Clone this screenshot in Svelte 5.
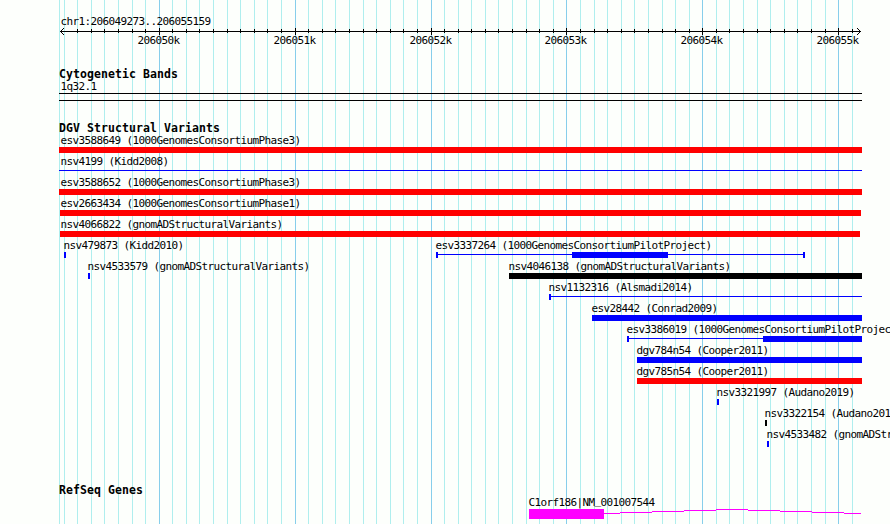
<script lang="ts">
    const LEFT = 59;
    const RIGHT = 862;
    const ORIGIN = 159.225; // x of 206050k
    const KB = 135.89;

    const majors = [0, 1, 2, 3, 4, 5].map((i) => ({
        x: Math.floor(ORIGIN + i * KB),
        label: `${206050 + i}k`,
    }));

    const minors: number[] = [];
    for (let i = -7; i <= 51; i++) {
        if (i % 10 !== 0) minors.push(Math.floor(ORIGIN + (i * KB) / 10));
    }

    const RED = '#ff0000';
    const BLUE = '#0000ff';
    const BLACK = '#000000';

    type Variant = {
        name: string;
        x: number;
        color: string;
        line?: [number, number];
        caps?: number[];
        bar?: [number, number];
    };

    const rows: Variant[][] = [
        [{ name: 'esv3588649 (1000GenomesConsortiumPhase3)', x: 60, color: RED, bar: [59, 862] }],
        [{ name: 'nsv4199 (Kidd2008)', x: 60, color: BLUE, line: [59, 862] }],
        [{ name: 'esv3588652 (1000GenomesConsortiumPhase3)', x: 60, color: RED, bar: [59, 862] }],
        [{ name: 'esv2663434 (1000GenomesConsortiumPhase1)', x: 60, color: RED, bar: [60, 861] }],
        [{ name: 'nsv4066822 (gnomADStructuralVariants)', x: 60, color: RED, bar: [60, 860] }],
        [
            { name: 'nsv479873 (Kidd2010)', x: 63, color: BLUE, bar: [64, 66] },
            { name: 'esv3337264 (1000GenomesConsortiumPilotProject)', x: 435, color: BLUE, line: [436, 805], caps: [436, 803], bar: [572, 668] },
        ],
        [
            { name: 'nsv4533579 (gnomADStructuralVariants)', x: 87, color: BLUE, bar: [88, 90] },
            { name: 'nsv4046138 (gnomADStructuralVariants)', x: 508, color: BLACK, bar: [509, 862] },
        ],
        [{ name: 'nsv1132316 (Alsmadi2014)', x: 548, color: BLUE, line: [549, 862], caps: [549] }],
        [{ name: 'esv28442 (Conrad2009)', x: 591, color: BLUE, bar: [592, 862] }],
        [{ name: 'esv3386019 (1000GenomesConsortiumPilotProject)', x: 626, color: BLUE, line: [627, 763], caps: [627], bar: [763, 862] }],
        [{ name: 'dgv784n54 (Cooper2011)', x: 636, color: BLUE, bar: [637, 862] }],
        [{ name: 'dgv785n54 (Cooper2011)', x: 636, color: RED, bar: [637, 862] }],
        [{ name: 'nsv3321997 (Audano2019)', x: 716, color: BLUE, bar: [717, 719] }],
        [{ name: 'nsv3322154 (Audano2019)', x: 764, color: BLACK, bar: [765, 767] }],
        [{ name: 'nsv4533482 (gnomADStructuralVariants)', x: 766, color: BLUE, bar: [767, 769] }],
    ];

    // intron hat, one step per pixel row
    const intron = [
        [604, 620, 17],
        [620, 652, 16],
        [652, 684, 15],
        [684, 716, 14],
        [716, 748, 13],
        [748, 780, 14],
        [780, 812, 15],
        [812, 844, 16],
        [844, 861, 17],
    ];
</script>

<main class="browser">
    <svg class="grid" width="890" height="524">
        <rect class="minor" x={LEFT} y="0" width="1" height="524" />
        {#each minors as x}
            <rect class="minor" {x} y="0" width="1" height="524" />
        {/each}
        {#each majors as m}
            <rect class="major" x={m.x} y="0" width="1" height="524" />
        {/each}
    </svg>

    <div class="tracks">
        <svg class="ruler" width="890" height="67">
            <text x="60.4" y="25">chr1:206049273..206055159</text>
            <rect x="60" y="31" width="801" height="1" />
            <path class="arrow" d="M64 28 L60.5 31.5 L64 35 M857 28 L860.5 31.5 L857 35" />
            {#each minors.slice(1) as x}
                <rect {x} y="29" width="1" height="4" />
            {/each}
            {#each majors as m}
                <rect x={m.x} y="28" width="1" height="7" />
                <text x={m.x - 21.6} y="44">{m.label}</text>
            {/each}
        </svg>

        <section class="bands">
            <h2>Cytogenetic Bands</h2>
            <svg width="890" height="21">
                <text x="60.4" y="10">1q32.1</text>
                <rect x={LEFT} y="13" width={RIGHT - LEFT} height="1" />
                <rect x={LEFT} y="20" width={RIGHT - LEFT} height="1" />
            </svg>
        </section>

        <section class="variants">
            <h2>DGV Structural Variants</h2>
            {#each rows as row}
                <svg width="890" height="21">
                    {#each row as v}
                        <g fill={v.color}>
                            {#if v.line}
                                <rect x={v.line[0]} y="15" width={v.line[1] - v.line[0]} height="1" />
                            {/if}
                            {#each v.caps ?? [] as cap}
                                <rect x={cap} y="13" width="2" height="6" />
                            {/each}
                            {#if v.bar}
                                <rect x={v.bar[0]} y="13" width={v.bar[1] - v.bar[0]} height="6" />
                            {/if}
                        </g>
                        <text x={v.x + 0.4} y="10">{v.name}</text>
                    {/each}
                </svg>
            {/each}
        </section>

        <section>
            <h2>RefSeq Genes</h2>
            <svg width="890" height="28">
                <g class="gene">
                    <rect x="529" y="13" width="75" height="10" />
                    {#each intron as [from, to, y]}
                        <rect x={from} {y} width={to - from} height="1" />
                    {/each}
                </g>
                <text x="528.4" y="10">C1orf186|NM<tspan dy="-2">_</tspan><tspan dy="2">001007544</tspan></text>
            </svg>
        </section>
    </div>
</main>

<style>
    :global(body) {
        margin: 0;
        background: #fdfffc;
    }

    .browser {
        position: relative;
        width: 890px;
        height: 524px;
        overflow: hidden;
        background: #fdfffc;
        color: #000;
        font-family: 'DejaVu Sans Mono', 'Liberation Mono', monospace;
    }

    .grid {
        position: absolute;
        top: 0;
        left: 0;
    }

    .minor {
        fill: #afeeee;
    }

    .major {
        fill: #87ceeb;
    }

    .tracks {
        position: relative;
        display: flex;
        flex-direction: column;
    }

    section {
        display: flex;
        flex-direction: column;
    }

    svg {
        display: block;
        shape-rendering: crispEdges;
    }

    text {
        font-size: 11px;
        letter-spacing: -0.622px;
        white-space: pre;
    }

    h2 {
        margin: 0;
        padding-left: 59px;
        height: 13px;
        font-size: 11.5px;
        line-height: 15px;
        font-weight: 700;
        letter-spacing: 0.077px;
    }

    .bands {
        margin-bottom: 20px;
    }

    .variants {
        margin-bottom: 34px;
    }

    .arrow {
        fill: none;
        stroke: #000;
        stroke-width: 1;
    }

    .gene {
        fill: #ff00ff;
    }
</style>
